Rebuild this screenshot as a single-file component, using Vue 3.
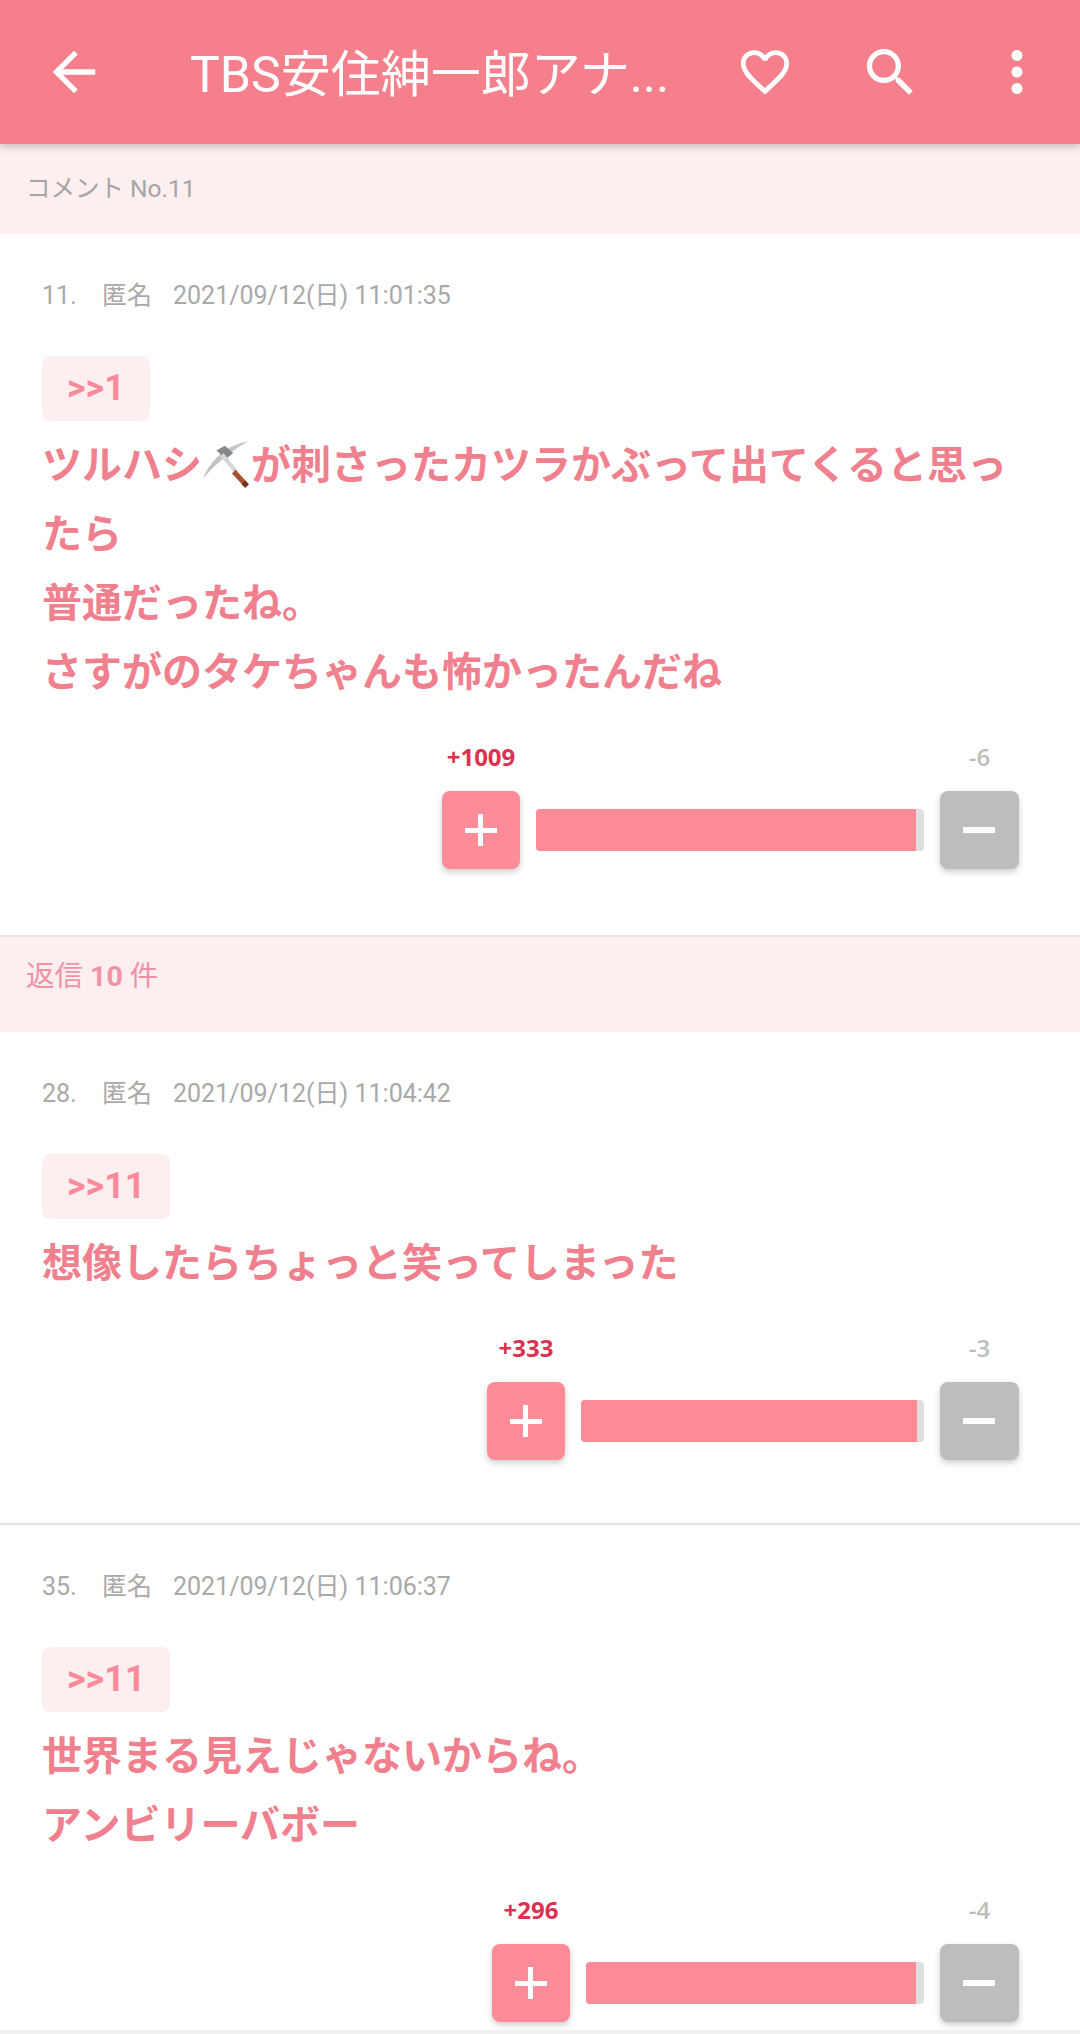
<script setup>
const comments = [
  {
    no: 11,
    date: "2021/09/12(日) 11:01:35",
    quote: ">>1",
    lines: [
      ["ツルハシ", "が刺さったカツラかぶって出てくると思っ"],
      ["たら"],
      ["普通だったね。"],
      ["さすがのタケちゃんも怖かったんだね"],
    ],
    plus: 1009,
    minus: 6,
    barWidth: 388,
    fill: 98,
  },
  {
    no: 28,
    date: "2021/09/12(日) 11:04:42",
    quote: ">>11",
    lines: [["想像したらちょっと笑ってしまった"]],
    plus: 333,
    minus: 3,
    barWidth: 343,
    fill: 98,
  },
  {
    no: 35,
    date: "2021/09/12(日) 11:06:37",
    quote: ">>11",
    lines: [["世界まる見えじゃないからね。"], ["アンビリーバボー"]],
    plus: 296,
    minus: 4,
    barWidth: 338,
    fill: 97.5,
  },
];
</script>

<template>
  <div class="page">
    <header class="toolbar">
      <button class="icon back">
        <svg viewBox="0 0 24 24" width="64" height="64"><path d="M20 11H7.83l5.59-5.59L12 4l-8 8 8 8 1.41-1.41L7.83 13H20v-2z" /></svg>
      </button>
      <h1 class="title">TBS安住紳一郎アナ...</h1>
      <button class="icon heart">
        <svg viewBox="0 0 24 24" width="58" height="58"><path d="M16.5 3c-1.74 0-3.41.81-4.5 2.09C10.91 3.81 9.24 3 7.5 3 4.42 3 2 5.42 2 8.5c0 3.78 3.4 6.86 8.55 11.54L12 21.35l1.45-1.32C18.6 15.36 22 12.28 22 8.5 22 5.42 19.58 3 16.5 3zm-4.4 15.55l-.1.1-.1-.1C7.14 14.24 4 11.39 4 8.5 4 6.5 5.5 5 7.5 5c1.54 0 3.04.99 3.57 2.36h1.87C13.46 5.99 14.96 5 16.5 5c2 0 3.5 1.5 3.5 3.5 0 2.89-3.14 5.74-7.9 10.05z" /></svg>
      </button>
      <button class="icon search">
        <svg viewBox="0 0 24 24" width="63" height="63"><path d="M15.5 14h-.79l-.28-.27C15.41 12.59 16 11.11 16 9.5 16 5.91 13.09 3 9.5 3S3 5.91 3 9.5 5.91 16 9.5 16c1.61 0 3.09-.59 4.23-1.57l.27.28v.79l5 4.99L20.49 19l-4.99-5zm-6 0C7.01 14 5 11.99 5 9.5S7.01 5 9.5 5 14 7.01 14 9.5 11.99 14 9.5 14z" /></svg>
      </button>
      <button class="icon more">
        <svg viewBox="0 0 24 24" width="66" height="66"><path d="M12 8c1.1 0 2-.9 2-2s-.9-2-2-2-2 .9-2 2 .9 2 2 2zm0 2c-1.1 0-2 .9-2 2s.9 2 2 2 2-.9 2-2-.9-2-2-2zm0 6c-1.1 0-2 .9-2 2s.9 2 2 2 2-.9 2-2-.9-2-2-2z" /></svg>
      </button>
    </header>

    <div class="subhead">コメント No.11</div>

    <template v-for="(c, i) in comments" :key="c.no">
      <article class="comment" :class="{ last: i === 2, divided: i === 1 }">
        <div class="meta">
          <span class="no">{{ c.no }}.</span>
          <span class="name">匿名</span>
          <span class="date">{{ c.date }}</span>
        </div>
        <span class="quote">{{ c.quote }}</span>
        <div class="body">
          <p v-for="(line, n) in c.lines" :key="n">
            {{ line[0] }}<svg v-if="line.length > 1" class="pick" viewBox="0 0 40 40" width="50" height="48">
              <path d="M1 31 C5 21 12 13 19 8 C25 4 31 2 39 0 C32 4 27 7 23 11 C15 16 8 23 1 31z" fill="#c2c4c6" />
              <path d="M12 8 L19 4 L26 10 L20 15z" fill="#85888b" />
              <path d="M18 10 L30 25 L27.5 27 L15.5 13z" fill="#d5d7d9" />
              <path d="M28 24 L39 36 L36 39 L25 27z" fill="#a4532f" />
              <path d="M36 33 L39 36 L36 39 L33 36z" fill="#6d3218" />
            </svg>{{ line[1] }}
          </p>
        </div>
        <div class="vote">
          <div class="side">
            <span class="count up">+{{ c.plus }}</span>
            <div class="btn plus"><i class="h"></i><i class="v"></i></div>
          </div>
          <div class="bar" :style="{ width: c.barWidth + 'px' }">
            <div class="fill" :style="{ width: c.fill + '%' }"></div>
          </div>
          <div class="side wide">
            <span class="count down">-{{ c.minus }}</span>
            <div class="btn minus"><i class="h"></i></div>
          </div>
        </div>
      </article>
      <div v-if="i === 0" class="replies">返信 <b>10</b> 件</div>
    </template>
  </div>
</template>

<style scoped>
.page {
  width: 1080px;
  height: 2034px;
  overflow: hidden;
  background: #fff;
  font-family: Roboto, "Noto Sans CJK JP", sans-serif;
}

.toolbar {
  position: relative;
  z-index: 1;
  height: 144px;
  display: flex;
  align-items: center;
  background: #f5808c;
  box-shadow: 0 3px 8px rgba(0, 0, 0, 0.22);
}

.icon {
  border: 0;
  padding: 0;
  background: none;
  display: flex;
  fill: #fff;
}

.back { margin-left: 42px; }

.title {
  flex: 1;
  margin: 0 0 4px 84px;
  color: #fff;
  font-size: 50px;
  font-weight: 400;
  white-space: nowrap;
}

.search { margin-left: 65px; }
.more { margin: 0 30px 0 62px; }

.subhead {
  height: 90px;
  padding: 27px 0 0 26px;
  box-sizing: border-box;
  background: #fdeef0;
  color: #a5a5a5;
  font-size: 24.5px;
  line-height: 36px;
}

.comment {
  padding: 0 42px;
  height: 701px;
  box-sizing: border-box;
}

.comment.divided {
  height: 493px;
  border-bottom: 2px solid #e4e4e6;
}

.comment.last {
  height: 509px;
  border-bottom: 4px solid #f0f0f0;
}

.meta {
  padding-top: 44px;
  display: flex;
  color: #a9a9a9;
  font-size: 25px;
  line-height: 36px;
}

.no { width: 60px; }
.name { width: 71px; }

.quote {
  display: inline-block;
  margin-top: 42px;
  height: 65px;
  padding: 0 25px;
  border-radius: 8px;
  background: #fdeef0;
  color: #fb8b9a;
  font-size: 36px;
  font-weight: 700;
  line-height: 65px;
}

.body {
  margin-top: 7px;
  color: #f0808e;
  font-size: 40px;
  font-weight: 700;
  line-height: 69px;
  font-family: "Noto Sans CJK JP", sans-serif;
}

.body p {
  margin: 0;
  white-space: nowrap;
}

.pick {
  margin: 0 0 0 -1px;
  vertical-align: -10px;
}

.vote {
  position: relative;
  display: flex;
  justify-content: flex-end;
  align-items: flex-end;
  gap: 16px;
  padding-right: 19px;
  margin-top: 36px;
}

.side {
  width: 78px;
  display: flex;
  flex-direction: column;
  align-items: center;
  gap: 17px;
}

.side.wide { width: 79px; }

.count {
  font-family: "Open Sans", sans-serif;
  font-size: 24px;
  line-height: 34px;
  white-space: nowrap;
}

.count.up {
  color: #dc3150;
  font-weight: 700;
}

.count.down {
  color: #bdbdbd;
  font-weight: 600;
}

.btn {
  position: relative;
  width: 100%;
  height: 78px;
  border-radius: 8px;
  box-shadow: 0 3px 6px rgba(0, 0, 0, 0.2);
}

.plus { background: #fe8b98; }
.minus { background: #bdbdbd; }

.btn i {
  position: absolute;
  background: #fff;
}

.btn .h {
  left: 23px;
  top: 36px;
  width: 32px;
  height: 6px;
}

.btn .v {
  left: 36px;
  top: 23px;
  width: 6px;
  height: 32px;
}

.plus .h {
  top: 37px;
  height: 5px;
}

.plus .v {
  width: 5px;
}

.bar {
  height: 42px;
  margin-bottom: 18px;
  border-radius: 4px;
  background: #dedfe1;
  overflow: hidden;
}

.fill {
  height: 100%;
  background: #fe8b98;
}

.replies {
  height: 97px;
  padding: 20px 0 0 26px;
  box-sizing: border-box;
  border-top: 2px solid #ebe3e6;
  background: #fdeef0;
  color: #f193a4;
  font-size: 28.5px;
  line-height: 40px;
}

.replies b { font-weight: 700; }
</style>
